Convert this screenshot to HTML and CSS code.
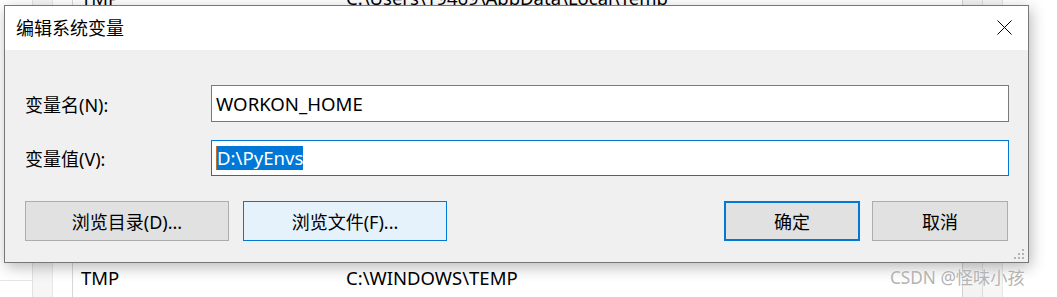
FILE: index.html
```html
<!DOCTYPE html>
<html lang="zh-CN">
<head>
<meta charset="utf-8">
<title>编辑系统变量</title>
<link rel="stylesheet" href="styles.css">
</head>
<body>
<div class="bg">
  <div class="bgrow top">
    <div class="c c1"></div>
    <div class="c c2"></div>
    <div class="c c3"></div>
    <div class="c name">TMP</div>
    <div class="c val">C:\Users\19469\AppData\Local\Temp</div>
    <div class="c r1"></div>
    <div class="c r2"></div>
    <div class="c r3"></div>
  </div>
  <div class="bgfill"></div>
  <div class="bgrow bottom">
    <div class="c c1"><span class="hline"></span></div>
    <div class="c c2"></div>
    <div class="c c3"></div>
    <div class="c name">TMP</div>
    <div class="c val">C:\WINDOWS\TEMP</div>
    <div class="c r1"></div>
    <div class="c r2"></div>
    <div class="c r3"></div>
  </div>
</div>

<div class="dialog">
  <div class="titlebar">
    <span class="title">编辑系统变量</span>
    <svg class="close" width="15" height="15" viewBox="0 0 15 15">
      <path d="M0.5 0.5 L14.5 14.5 M14.5 0.5 L0.5 14.5" stroke="#000" stroke-width="1" fill="none"/>
    </svg>
  </div>
  <div class="body">
    <div class="field">
      <span class="label">变量名(N):</span>
      <div class="input">WORKON_HOME</div>
    </div>
    <div class="field second">
      <span class="label">变量值(V):</span>
      <div class="input focused"><span class="sel">D:\PyEnvs</span></div>
    </div>
    <div class="buttons">
      <div class="btn wide">浏览目录(D)...</div>
      <div class="btn wide hover">浏览文件(F)...</div>
      <div class="spacer"></div>
      <div class="btn narrow default">确定</div>
      <div class="btn narrow">取消</div>
    </div>
  </div>
  <svg class="grip" width="12" height="12" viewBox="0 0 12 12">
    <g fill="#b4b4b4">
      <rect x="8" y="0" width="2" height="2"/>
      <rect x="4" y="4" width="2" height="2"/>
      <rect x="8" y="4" width="2" height="2"/>
      <rect x="0" y="8" width="2" height="2"/>
      <rect x="4" y="8" width="2" height="2"/>
      <rect x="8" y="8" width="2" height="2"/>
    </g>
  </svg>
</div>

<div class="watermark">CSDN @怪味小孩</div>
</body>
</html>
```
FILE: styles.css
```css
* { box-sizing: border-box; }
html, body {
  margin: 0;
  padding: 0;
  width: 1057px;
  height: 297px;
  overflow: hidden;
  background: #ffffff;
  font-family: "Noto Sans", "Noto Sans CJK SC", sans-serif;
  font-size: 18px;
  color: #000;
}

/* background window (list behind dialog) */
.bg {
  width: 1057px;
  height: 297px;
  display: flex;
  flex-direction: column;
  font-size: 18.5px;
}
.bgrow {
  display: flex;
  flex: none;
}
.bgrow.top {
  height: 14px;
  margin-top: -9px;
  line-height: 14px;
}
.bgfill { flex: 1; }
.bgrow.bottom {
  height: 34px;
  line-height: 30px;
}
.c { flex: none; height: 100%; white-space: nowrap; }
.c1 { width: 33px; border-right: 1px solid #e2e2e2; position: relative; }
.hline { display: block; margin-top: 17px; height: 1px; background: #e6e6e6; }
.c2 { width: 20px; border-right: 1px solid #e8e8e8; background: #f6f6f6; }
.c3 { width: 20px; border-right: 1px solid #d8d8d8; }
.name { width: 262px; padding-left: 8px; }
.val { width: 627px; padding-left: 11px; }
.r1 { width: 20px; border-left: 1px solid #d0d0d0; background: #f3f3f3; }
.r2 { width: 20px; border-left: 1px solid #dcdcdc; background: #f6f6f6; }
.r3 { flex: 1; border-left: 1px solid #e6e6e6; }

/* dialog */
.dialog {
  position: absolute;
  left: 4px;
  top: 5px;
  width: 1025px;
  height: 258px;
  border: 1px solid #777777;
  background: #f0f0f0;
  display: flex;
  flex-direction: column;
  box-shadow: 2px 4px 14px rgba(0, 0, 0, 0.28);
}
.titlebar {
  height: 44px;
  flex: none;
  background: #ffffff;
  display: flex;
  align-items: center;
  justify-content: space-between;
  padding: 0 16px 0 11px;
}
.title { font-family: "Noto Sans CJK SC", sans-serif; font-size: 18px; line-height: 1; margin-top: -3px; }
.close { display: block; margin-top: -1px; }

.body {
  flex: 1;
  display: flex;
  flex-direction: column;
  padding: 35px 19px 0 20px;
}
.field {
  display: flex;
  align-items: center;
  height: 37px;
}
.field.second { margin-top: 18px; height: 36px; }
.label {
  width: 186px;
  flex: none;
  padding-left: 0;
}
.input {
  flex: 1;
  height: 100%;
  background: #ffffff;
  border: 1px solid #7a7a7a;
  display: flex;
  align-items: center;
  padding-left: 4px;
  font-size: 18.6px;
}
.input.focused { border-color: #0078d7; }
.sel {
  background: #0078d7;
  color: #ffffff;
  height: 24px;
  line-height: 24px;
  display: inline-block;
  border-left: 1px solid #c0702a;
}

.buttons {
  display: flex;
  margin-top: 25px;
  margin-right: 1px;
  height: 40px;
}
.btn {
  height: 40px;
  background: #e1e1e1;
  border: 1px solid #adadad;
  display: flex;
  align-items: center;
  justify-content: center;
}
.btn.wide { width: 204px; }
.btn.wide + .btn.wide { margin-left: 14px; }
.btn.hover { background: #e5f1fb; border-color: #0078d7; }
.spacer { flex: 1; }
.btn.narrow { width: 136px; }
.btn.narrow + .btn.narrow { margin-left: 12px; }
.btn.default { border: 2px solid #0078d7; }

.grip {
  position: absolute;
  right: 2px;
  bottom: 1px;
}

.watermark {
  position: absolute;
  left: 890px;
  top: 266px;
  font-family: "Noto Sans", "Noto Sans CJK SC", sans-serif;
  font-size: 17.2px;
  line-height: 24px;
  color: #b3b3b3;
  text-shadow: 0 0 2px #fff;
  white-space: nowrap;
}
```
